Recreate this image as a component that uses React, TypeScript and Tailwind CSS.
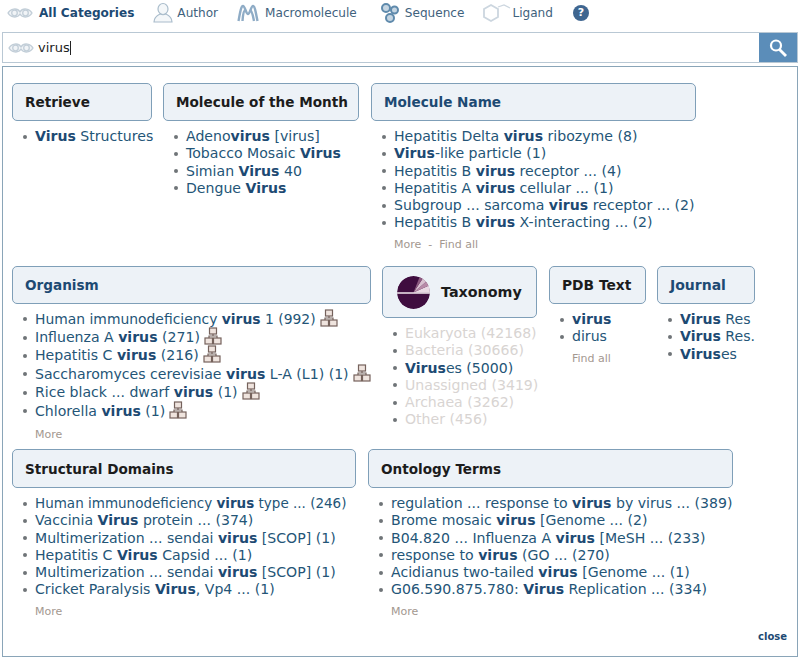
import React from "react";

const B = ({ children }: { children: React.ReactNode }) => <b className="font-bold text-[#1d4a73]">{children}</b>;

const Tree = () => (
  <svg width="18" height="18" viewBox="0 0 18 18" className="inline-block ml-[4px] align-[-3px]" fill="#efe4de" stroke="#75625c" strokeWidth="1.200">
    <rect x="5.500" y="1" width="7" height="6" />
    <path d="M9 7v2M5 11V9h8v2" fill="none" />
    <rect x="1" y="11" width="7.500" height="6" />
    <rect x="9.500" y="11" width="7.500" height="6" />
  </svg>
);

const Eyes = ({ c = "" }: { c?: string }) => (
  <svg width="26" height="12" viewBox="0 0 26 12" className={c} fill="none" stroke="#c2ced8" strokeWidth="1.300">
    <path d="M1 6c2-4 9-6 12-1 3-5 10-3 12 1-2 4-9 6-12 1-3 5-10 3-12-1z" fill="#f1f4f7" />
    <circle cx="7.500" cy="6" r="2.800" />
    <circle cx="18.500" cy="6" r="2.800" />
  </svg>
);

const Card = ({ w, h = "h-[38px]", size = "text-[13.600px]", blue, children }: { w: string; h?: string; size?: string; blue?: boolean; children: React.ReactNode }) => (
  <div className={`${w} ${h} ${size} flex items-center pl-[12px] pt-[1px] rounded-[5px] border border-[#7f9fb8] bg-[#edf2f7] font-bold whitespace-nowrap ${blue ? "text-[#1d4a73]" : "text-[#1c1c1c]"}`}>
    {children}
  </div>
);

const List = ({ items, dim, mt = "mt-[7px]", row = "h-[17.25px]" }: { items: React.ReactNode[]; dim?: number[]; mt?: string; row?: string }) => (
  <ul className={`${mt} ml-[11px]`}>
    {items.map((it, i) => (
      <li key={i} className={`${row} whitespace-nowrap flex items-center ${dim?.includes(i) ? "text-[#d8d4d2]" : "text-[#245577]"}`}>
        <span className="w-[4px] h-[4px] rounded-full bg-[#6f7478] mr-[8px] shrink-0" />
        <span>{it}</span>
      </li>
    ))}
  </ul>
);

const More = ({ children, mt = "mt-[5px]" }: { children: React.ReactNode; mt?: string }) => (
  <div className={`ml-[23px] ${mt} text-[11px] text-[#a3988f]`}>{children}</div>
);

export default function App() {
  return (
    <div className="w-[800px] h-[660px] bg-white overflow-hidden text-[14.100px] text-[#245577]" style={{ fontFamily: '"DejaVu Sans", Verdana, sans-serif' }}>
      <div className="h-[32px] pb-[6px] flex items-center text-[12.100px] text-[#3f627d]">
        <Eyes c="ml-[7px]" />
        <span className="ml-[6px] font-bold text-[#1d4a73]">All Categories</span>
        <svg width="20" height="22" viewBox="0 0 20 22" className="ml-[19px]" fill="#f4f7f9" stroke="#a9bccb" strokeWidth="1.200">
          <ellipse cx="10" cy="7" rx="5" ry="5.500" />
          <path d="M1 20c0-5 4-7 6-8 2 1 4 1 6 0 2 1 6 3 6 8z" />
        </svg>
        <span className="ml-[4px]">Author</span>
        <svg width="22" height="18" viewBox="0 0 22 18" className="ml-[19px]" fill="none" stroke="#8facc6" strokeWidth="2.400">
          <path d="M1.500 17C3 9 4 2 6 2s3 8 5 8 3-8 5-8 3 8 4.500 15" />
          <path d="M5.500 17C6 10 7 6 8.500 6M13 6c2 0 3 6 4 11" />
        </svg>
        <span className="ml-[6px]">Macromolecule</span>
        <svg width="20" height="22" viewBox="0 0 20 22" className="ml-[23px]" fill="#c5d5e2" stroke="#5f8aac" strokeWidth="2">
          <circle cx="6" cy="6" r="4" />
          <circle cx="14.500" cy="8" r="3.500" />
          <circle cx="10" cy="16" r="4" />
        </svg>
        <span className="ml-[5px]">Sequence</span>
        <svg width="28" height="20" viewBox="0 0 28 20" className="ml-[19px]" fill="none" stroke="#ccd6df" strokeWidth="1.300">
          <path d="M8 2l7 4v8l-7 4-7-4V6z" strokeWidth="1.800" />
          <path d="M15 4l6-2 6 3" />
        </svg>
        <span className="ml-[1px]">Ligand</span>
        <div className="ml-[20px] w-[16px] h-[16px] rounded-full bg-[#3f6690] text-white text-[11px] font-bold flex items-center justify-center">?</div>
      </div>

      <div className="mx-[2px] h-[31px] border border-[#b9c8d4] flex items-center">
        <Eyes c="ml-[5px]" />
        <span className="ml-[4px] text-[13px] text-[#222]">virus</span>
        <span className="w-px h-[14px] bg-[#222]" />
        <div className="ml-auto w-[38px] h-full bg-[#5b8db9] flex items-center justify-center">
          <svg width="22" height="22" viewBox="0 0 22 22" fill="none" stroke="#fff">
            <circle cx="9" cy="8.500" r="5" strokeWidth="2.200" />
            <path d="M12.500 12.500L19 19" strokeWidth="2.800" />
          </svg>
        </div>
      </div>

      <div className="mx-[2px] mt-[3px] h-[591px] border border-[#8aa5b8] pt-[16px] pl-[9px] relative">
        <div className="flex h-[183px] gap-[11px]">
          <div className="w-[140px]">
            <Card w="w-[140px]">Retrieve</Card>
            <List items={[<><B>Virus</B> Structures</>]} />
          </div>
          <div className="w-[196px]">
            <Card w="w-[196px]">Molecule of the Month</Card>
            <List items={[
              <>Adeno<B>virus</B> [virus]</>,
              <>Tobacco Mosaic <B>Virus</B></>,
              <>Simian <B>Virus</B> 40</>,
              <>Dengue <B>Virus</B></>,
            ]} />
          </div>
          <div className="w-[325px] ml-[1px]">
            <Card w="w-[325px]" blue>Molecule Name</Card>
            <List items={[
              <>Hepatitis Delta <B>virus</B> ribozyme (8)</>,
              <><B>Virus</B>-like particle (1)</>,
              <>Hepatitis B <B>virus</B> receptor ... (4)</>,
              <>Hepatitis A <B>virus</B> cellular ... (1)</>,
              <>Subgroup ... sarcoma <B>virus</B> receptor ... (2)</>,
              <>Hepatitis B <B>virus</B> X-interacting ... (2)</>,
            ]} />
            <More>More &nbsp;-&nbsp; Find all</More>
          </div>
        </div>

        <div className="flex h-[183px] gap-[11px]">
          <div className="w-[359px]">
            <Card w="w-[359px]" blue>Organism</Card>
            <List mt="mt-[6px]" row="h-[18.400px]" items={[
              <><span className="text-[13.900px]">Human immunodeficiency <B>virus</B> 1 (992)</span><Tree /></>,
              <>Influenza A <B>virus</B> (271)<Tree /></>,
              <>Hepatitis C <B>virus</B> (216)<Tree /></>,
              <>Saccharomyces cerevisiae <B>virus</B> L-A (L1) (1)<Tree /></>,
              <>Rice black ... dwarf <B>virus</B> (1)<Tree /></>,
              <>Chlorella <B>virus</B> (1)<Tree /></>,
            ]} />
            <More mt="mt-[7px]">More</More>
          </div>
          <div className="w-[155px]">
            <Card w="w-[155px]" h="h-[52px]" size="text-[14.300px]">
              <span className="w-[33px] h-[33px] rounded-full ml-[2px] mr-[11px] shrink-0 relative overflow-hidden">
                <svg width="33" height="33" viewBox="0 0 33 33" className="absolute inset-0">
                  <circle cx="16.500" cy="16.500" r="16.500" fill="#3f0d3f" />
                  <path d="M16.500 16.500L33 16.500V9z" fill="#ead9e4" />
                  <path d="M16.500 16.500L33 9L30 5z" fill="#b88aa8" />
                  <path d="M16.500 16.500L30 5L26 2z" fill="#d9c0d0" />
                  <path d="M16.500 16.500L26 2L23 0z" fill="#8d5a80" />
                  <path d="M0 17h33" stroke="#f3e8ef" strokeWidth="1.500" />
                </svg>
              </span>
              Taxonomy
            </Card>
            <List mt="mt-[7px]" dim={[0, 1, 3, 4, 5]} items={[
              "Eukaryota (42168)",
              "Bacteria (30666)",
              <><B>Virus</B>es (5000)</>,
              "Unassigned (3419)",
              "Archaea (3262)",
              "Other (456)",
            ]} />
          </div>
          <div className="w-[97px] ml-[1px]">
            <Card w="w-[97px]" size="text-[13.800px]">PDB Text</Card>
            <List items={[<B>virus</B>, "dirus"]} />
            <More>Find all</More>
          </div>
          <div className="w-[98px]">
            <Card w="w-[98px]" blue size="text-[14px]">Journal</Card>
            <List items={[<><B>Virus</B> Res</>, <><B>Virus</B> Res.</>, <><B>Virus</B>es</>]} />
          </div>
        </div>

        <div className="flex gap-[12px]">
          <div className="w-[344px]">
            <Card w="w-[344px]" h="h-[39px]">Structural Domains</Card>
            <List items={[
              <span className="text-[13.500px]">Human immunodeficiency <B>virus</B> type ... (246)</span>,
              <>Vaccinia <B>Virus</B> protein ... (374)</>,
              <>Multimerization ... sendai <B>virus</B> [SCOP] (1)</>,
              <>Hepatitis C <B>Virus</B> Capsid ... (1)</>,
              <>Multimerization ... sendai <B>virus</B> [SCOP] (1)</>,
              <>Cricket Paralysis <B>Virus</B>, Vp4 ... (1)</>,
            ]} />
            <More>More</More>
          </div>
          <div className="w-[365px]">
            <Card w="w-[365px]" h="h-[39px]">Ontology Terms</Card>
            <List items={[
              <>regulation ... response to <B>virus</B> by virus ... (389)</>,
              <>Brome mosaic <B>virus</B> [Genome ... (2)</>,
              <>B04.820 ... Influenza A <B>virus</B> [MeSH ... (233)</>,
              <>response to <B>virus</B> (GO ... (270)</>,
              <>Acidianus two-tailed <B>virus</B> [Genome ... (1)</>,
              <>G06.590.875.780: <B>Virus</B> Replication ... (334)</>,
            ]} />
            <More>More</More>
          </div>
        </div>

        <div className="absolute right-[10px] bottom-[12px] text-[10px] font-bold text-[#1d4a73]">close</div>
      </div>
    </div>
  );
}
